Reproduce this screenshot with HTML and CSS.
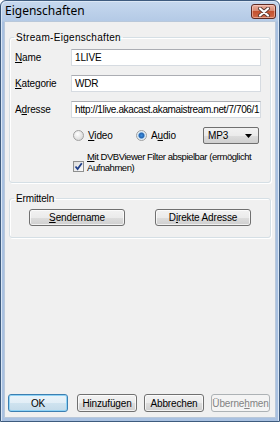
FILE: index.html
```html
<!DOCTYPE html>
<html>
<head>
<meta charset="utf-8">
<link rel="stylesheet" href="styles.css">
</head>
<body>
<div class="window">
  <div class="titlebar">
    <span class="title">Eigenschaften</span>
    <span class="close">
      <svg width="14" height="10" viewBox="0 0 14 10">
        <path d="M3 1.5 L11 8.5 M11 1.5 L3 8.5" stroke="#5a3a34" stroke-width="4" stroke-linecap="round"/>
        <path d="M3 1.5 L11 8.5 M11 1.5 L3 8.5" stroke="#ffffff" stroke-width="2.2" stroke-linecap="round"/>
      </svg>
    </span>
  </div>
  <div class="client">
    <fieldset class="group g1">
      <legend>Stream-Eigenschaften</legend>
      <div class="field"><span class="lbl"><u>N</u>ame</span><span class="input">1LIVE</span></div>
      <div class="field"><span class="lbl"><u>K</u>ategorie</span><span class="input">WDR</span></div>
      <div class="field"><span class="lbl">A<u>d</u>resse</span><span class="input url">http://1live.akacast.akamaistream.net/7/706/1</span></div>
      <div class="opts">
        <span class="radio"></span><span class="rlabel video"><u>V</u>ideo</span>
        <span class="radio on"></span><span class="rlabel audio">A<u>u</u>dio</span>
        <span class="combo"><span>MP3</span>
          <svg width="7" height="4" viewBox="0 0 7 4"><path d="M0 0H7L3.5 4Z" fill="#000"/></svg>
        </span>
      </div>
      <div class="check">
        <span class="box">
          <svg width="9" height="9" viewBox="0 0 9 9"><path d="M1.5 4.5 L3.6 7 L7.8 1.2" stroke="#1f3f8a" stroke-width="1.8" fill="none"/></svg>
        </span>
        <span class="ctext"><u>M</u>it DVBViewer Filter abspielbar (ermöglicht<br>Aufnahmen)</span>
      </div>
    </fieldset>
    <fieldset class="group g2">
      <legend>Ermitteln</legend>
      <div class="btns2">
        <span class="btn wide"><u>S</u>endername</span>
        <span class="btn wide">D<u>i</u>rekte Adresse</span>
      </div>
    </fieldset>
    <div class="spacer"></div>
    <div class="footer">
      <span class="btn def">OK</span>
      <span class="btn">Hinzufügen</span>
      <span class="btn">Abbrechen</span>
      <span class="btn dis">Überne<u>h</u>men</span>
    </div>
  </div>
</div>
</body>
</html>
```

FILE: styles.css
```css
html, body {
  margin: 0;
  padding: 0;
  background: #ffffff;
}
body {
  font-family: "Liberation Sans", Arial, sans-serif;
  font-size: 10px;
  letter-spacing: -0.15px;
  color: #000;
}
.window {
  width: 280px;
  height: 422px;
  box-sizing: border-box;
  display: flex;
  flex-direction: column;
  border: 1px solid #3e5b7e;
  border-radius: 6px 6px 0 0;
  background: linear-gradient(#c6d8ee 0px, #b4cae6 20px, #a9c1e1 21px, #a9c1e1 100%);
  box-shadow: inset 1px 1px 0 #dbe7f5, inset -1px 0 0 #dbe7f5;
}
.titlebar {
  height: 20px;
  display: flex;
  align-items: center;
  justify-content: space-between;
  padding: 0 3px 0 4px;
}
.title {
  font-family: "Noto Sans", "Liberation Sans", sans-serif;
  font-size: 12px;
  letter-spacing: 0;
  color: #000;
  margin-top: -1px;
}
.close {
  width: 23px;
  height: 13px;
  margin-top: 1px;
  border: 1px solid #5e2a22;
  border-radius: 3px;
  background: linear-gradient(#eab0a0 0%, #d88a72 45%, #c4512f 50%, #cf6a48 100%);
  display: flex;
  align-items: center;
  justify-content: center;
  box-shadow: inset 0 0 0 1px rgba(255,220,210,0.5);
}
.client {
  flex: 1;
  margin: 0 3px 3px;
  background: #f0f0f0;
  border: 1px solid #b9c8da;
  display: flex;
  flex-direction: column;
  padding: 0 4px;
}
.group {
  margin: 0;
  padding: 0;
  border: 1px solid #d5dfe5;
  border-radius: 3px;
  box-shadow: inset 1px 1px 0 #ffffff, 1px 1px 0 #ffffff;
  min-width: 0;
  box-sizing: border-box;
}
.group legend {
  padding: 0 2px;
  margin-left: 4px;
  line-height: 13px;
}
.g1 legend { letter-spacing: 0.3px; }
.g1 {
  margin-top: 9px;
  height: 152px;
  padding-top: 5px;
}
.field {
  display: flex;
  align-items: center;
  height: 17px;
  margin-bottom: 9px;
}
.lbl {
  width: 56px;
  padding-left: 5px;
}
.input {
  width: 190px;
  height: 17px;
  box-sizing: border-box;
  background: #fff;
  border: 1px solid #d6dbe1;
  border-top-color: #abadb3;
  padding: 0 0 0 3px;
  line-height: 15px;
  overflow: hidden;
  white-space: nowrap;
}
.url { letter-spacing: -0.38px; }
.opts {
  display: flex;
  align-items: center;
  height: 17px;
  padding-left: 63px;
}
.radio {
  width: 11px;
  height: 11px;
  box-sizing: border-box;
  border-radius: 50%;
  border: 1px solid #a0a0a0;
  background: radial-gradient(circle at 40% 35%, #ffffff, #dcdcdc 70%);
}
.radio.on {
  background: radial-gradient(circle, #3a8ee0 0, #2464b0 2.5px, #cfe6f7 3.5px, #f4f4f4 5px);
}
.rlabel { margin-left: 4px; }
.video { width: 48px; }
.audio { width: 52px; }
.combo {
  width: 56px;
  height: 17px;
  box-sizing: border-box;
  border: 1px solid #707070;
  border-radius: 2px;
  background: linear-gradient(#f2f2f2 0%, #ebebeb 50%, #dddddd 51%, #cfcfcf 100%);
  display: flex;
  align-items: center;
  justify-content: space-between;
  padding: 0 6px 0 4px;
}
.check {
  display: flex;
  align-items: flex-start;
  padding-left: 63px;
  margin-top: 7px;
}
.box {
  width: 11px;
  height: 11px;
  flex: none;
  box-sizing: border-box;
  border: 1px solid #8e8f8f;
  background: linear-gradient(135deg, #dcdcdc, #fbfbfb);
  margin-top: 10px;
  display: flex;
  align-items: center;
  justify-content: center;
}
.ctext {
  margin-left: 3px;
  font-size: 9.5px;
  letter-spacing: -0.45px;
  line-height: 11px;
  white-space: nowrap;
}
.g2 {
  margin-top: 9px;
  height: 46px;
  padding-top: 4px;
}
.btns2 {
  display: flex;
  padding-left: 19px;
  gap: 30px;
}
.btn {
  height: 17px;
  box-sizing: border-box;
  width: 60px;
  flex: none;
  border: 1px solid #707070;
  border-radius: 3px;
  background: linear-gradient(#f2f2f2 0%, #ebebeb 50%, #dddddd 51%, #cfcfcf 100%);
  box-shadow: inset 0 0 0 1px rgba(255,255,255,0.7);
  display: flex;
  align-items: center;
  justify-content: center;
  line-height: 13px;
}
.btn.wide { width: 96px; }
.spacer { flex: 1; }
.footer {
  display: flex;
  gap: 7px;
  margin-left: -1px;
  margin-bottom: 5px;
}
.footer .btn { height: 18px; }
.btn.def {
  margin-right: 2px;
  border-color: #3c7fb1;
  box-shadow: inset 0 0 0 1px #8fd3f6;
  background: linear-gradient(#eaf4fa 0%, #e2eef6 50%, #cfe3ef 51%, #c4dbea 100%);
}
.btn.dis {
  width: 59px;
  border-color: #adb2b5;
  background: #f4f4f4;
  color: #838383;
  box-shadow: none;
}
```
